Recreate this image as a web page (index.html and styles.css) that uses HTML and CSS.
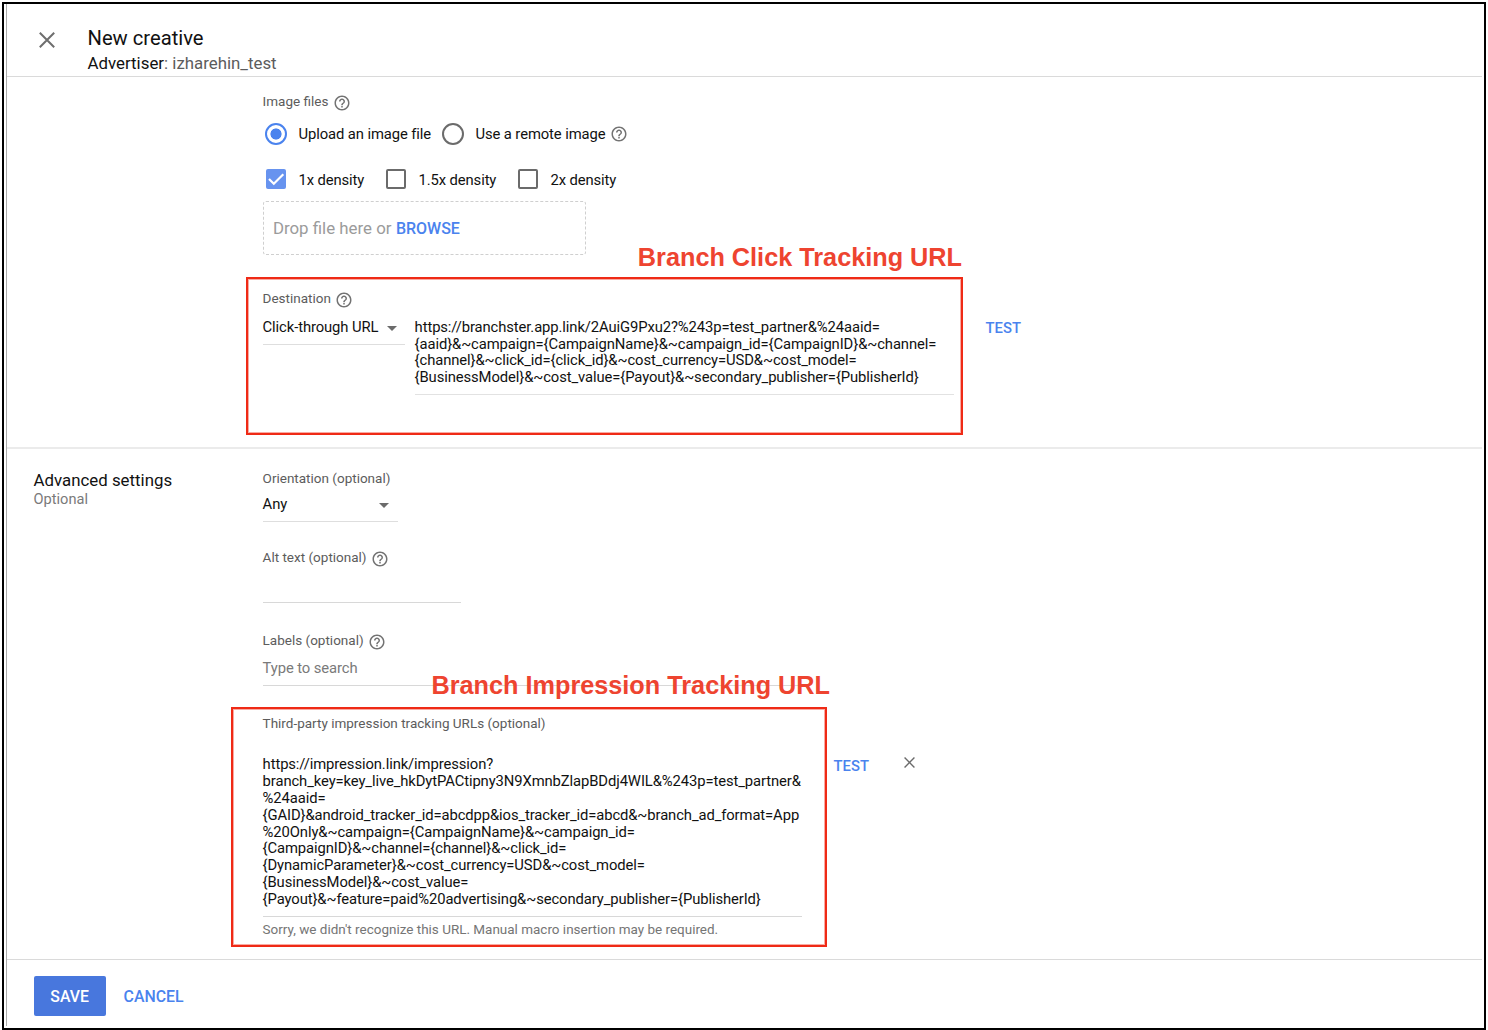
FILE: index.html
```html
<!DOCTYPE html>
<html lang="en">
<head>
<meta charset="utf-8">
<title>New creative</title>
<link rel="stylesheet" href="styles.css">
</head>
<body>
<svg class="defs" aria-hidden="true">
  <symbol id="help" viewBox="0 0 24 24"><path d="M11 18h2v-2h-2v2zm1-16C6.480 2 2 6.480 2 12s4.480 10 10 10 10-4.480 10-10S17.520 2 12 2zm0 18c-4.410 0-8-3.590-8-8s3.590-8 8-8 8 3.590 8 8-3.590 8-8 8zm0-14c-2.210 0-4 1.790-4 4h2c0-1.100.9-2 2-2s2 .9 2 2c0 2-3 1.750-3 5h2c0-2.250 3-2.500 3-5 0-2.210-1.790-4-4-4z"/></symbol>
  <symbol id="close" viewBox="0 0 16 16"><path d="M.8.8l14.400 14.400M15.200.8L.8 15.200" fill="none" stroke="currentColor" stroke-width="2"/></symbol>
</svg>
<div class="frame">
  <div class="screen">
    <header class="header">
      <svg class="close"><use href="#close"/></svg>
      <div class="heading">
        <h1 class="title">New creative</h1>
        <p class="advertiser">Advertiser<span class="advertiser-name">: izharehin_test</span></p>
      </div>
    </header>

    <section class="section files">
      <div class="side"></div>
      <div class="main">
        <div class="label"><span>Image files</span><svg class="help"><use href="#help"/></svg></div>
        <div class="radios">
          <span class="radio on"></span><span class="opt t-upload">Upload an image file</span>
          <span class="radio"></span><span class="opt t-remote">Use a remote image</span><svg class="help help-remote"><use href="#help"/></svg>
        </div>
        <div class="checks">
          <span class="check on"><svg viewBox="0 0 20 20"><path d="M3 10l4.800 4.800L17.300 5.300"/></svg></span><span class="opt t-1x">1x density</span>
          <span class="check"></span><span class="opt t-15x">1.5x density</span>
          <span class="check"></span><span class="opt">2x density</span>
        </div>
        <div class="drop"><span class="t-drop">Drop file here or</span><a class="link browse">BROWSE</a></div>
        <div class="destination">
          <div class="note note-click"><span class="note-text">Branch Click Tracking URL</span></div>
          <div class="label"><span>Destination</span><svg class="help"><use href="#help"/></svg></div>
          <div class="dest-row">
            <div class="select select-dest"><span>Click-through URL</span><i class="arrow"></i></div>
            <div class="url url-click">https://branchster.app.link/2AuiG9Pxu2?%243p=test_partner&amp;%24aaid=<br>{aaid}&amp;~campaign={CampaignName}&amp;~campaign_id={CampaignID}&amp;~channel=<br>{channel}&amp;~click_id={click_id}&amp;~cost_currency=USD&amp;~cost_model=<br>{BusinessModel}&amp;~cost_value={Payout}&amp;~secondary_publisher={PublisherId}</div>
            <a class="link test-click">TEST</a>
          </div>
        </div>
      </div>
    </section>

    <section class="section advanced">
      <div class="side">
        <h2 class="side-title">Advanced settings</h2>
        <p class="side-sub">Optional</p>
      </div>
      <div class="main">
        <div class="label"><span>Orientation (optional)</span></div>
        <div class="select select-any"><span>Any</span><i class="arrow"></i></div>
        <div class="label label-alt"><span>Alt text (optional)</span><svg class="help"><use href="#help"/></svg></div>
        <div class="input input-alt"></div>
        <div class="label label-labels"><span>Labels (optional)</span><svg class="help"><use href="#help"/></svg></div>
        <div class="input input-labels"><span>Type to search</span></div>
        <div class="impression">
          <div class="note note-impression"><span class="note-text">Branch Impression Tracking URL</span></div>
          <div class="label label-third"><span>Third-party impression tracking URLs (optional)</span></div>
          <div class="imp-row">
            <div class="url url-imp">https://impression.link/impression?<br>branch_key=key_live_hkDytPACtipny3N9XmnbZlapBDdj4WIL&amp;%243p=test_partner&amp;<br>%24aaid=<br>{GAID}&amp;android_tracker_id=abcdpp&amp;ios_tracker_id=abcd&amp;~branch_ad_format=App<br>%20Only&amp;~campaign={CampaignName}&amp;~campaign_id=<br>{CampaignID}&amp;~channel={channel}&amp;~click_id=<br>{DynamicParameter}&amp;~cost_currency=USD&amp;~cost_model=<br>{BusinessModel}&amp;~cost_value=<br>{Payout}&amp;~feature=paid%20advertising&amp;~secondary_publisher={PublisherId}</div>
            <a class="link test-imp">TEST</a>
            <svg class="remove"><use href="#close"/></svg>
          </div>
          <p class="hint">Sorry, we didn't recognize this URL. Manual macro insertion may be required.</p>
        </div>
      </div>
    </section>

    <footer class="footer">
      <button class="save">SAVE</button>
      <a class="link cancel">CANCEL</a>
    </footer>
  </div>
</div>
</body>
</html>
```
FILE: styles.css
```css
* { box-sizing: border-box; }
html, body { margin: 0; background: #fff; }
body {
  height: 1030px;
  padding: 2px 2px 0;
  overflow: hidden;
  font-family: Roboto, "Liberation Sans", sans-serif;
  font-size: 14.800px;
  color: #111;
  white-space: nowrap;
}
h1, h2, p { margin: 0; font-weight: 400; }
.defs { position: absolute; width: 0; height: 0; }
.frame { width: 1484px; height: 1028px; border: 2px solid #000; }
.screen {
  display: flex;
  flex-direction: column;
  height: 1022px;
  margin: 0 2px;
  border-left: 1px solid #ababab;
}

.header { display: flex; flex: none; height: 73px; border-bottom: 1px solid #dadada; }
.close { width: 16px; height: 16px; margin: 28px 0 0 32px; color: #6e6e6e; }
.heading { margin-left: 32.500px; padding-top: 21px; }
.title { font-size: 20.200px; line-height: 26px; }
.advertiser { font-size: 16.850px; line-height: 24px; }
.advertiser-name { color: #5c5c5c; }

.section { display: flex; flex: none; }
.files { height: 372px; border-bottom: 2px solid #ebebeb; }
.advanced { height: 511px; border-bottom: 1px solid #dadada; }
.side { width: 255.600px; padding-left: 26.500px; flex: none; }
.files .main { padding-top: 15px; }
.advanced .main { padding-top: 20px; }

.label { display: flex; align-items: center; height: 20px; font-size: 13.500px; line-height: 19px; color: #5c5c5c; }
.label .help { margin-left: 4.500px; }
.label span { height: 20px; }
.help { width: 18px; height: 18px; fill: #737373; flex: none; position: relative; top: .6px; }

.radios { display: flex; align-items: center; height: 22px; margin-top: 11px; padding-left: 2.400px; }
.radio { width: 22px; height: 22px; border: 2px solid #6b6b6b; border-radius: 50%; }
.radio.on { border-color: #4a83ee; background: radial-gradient(circle, #4a83ee 5.200px, transparent 5.900px); }
.opt { line-height: 22px; letter-spacing: -.1px; }
.radio + .opt { margin-left: 11.500px; }
.t-upload { width: 143.500px; }
.t-remote { width: 135px; }
.help-remote { top: 0; }

.checks { display: flex; align-items: center; height: 20px; margin-top: 24px; padding-left: 3.400px; }
.check { width: 20px; height: 20px; border: 2px solid #6b6b6b; border-radius: 2px; }
.check.on { border: 0; background: #6793ef; }
.check svg { display: block; width: 20px; height: 20px; fill: none; stroke: #fff; stroke-width: 2.200; }
.check + .opt { margin-left: 12.500px; padding-top: 1px; }
.t-1x { width: 87.500px; }
.t-15x { width: 99.500px; }

.drop {
  display: flex;
  align-items: center;
  width: 323.500px;
  height: 54px;
  margin-top: 12px;
  padding-left: 9.300px;
  border: 1px dashed #cfcfcf;
  border-radius: 3px;
  font-size: 16.850px;
  color: #9b9b9b;
}
.link { font-weight: 500; color: #4a83ee; }
.t-drop { width: 123px; }
.browse { font-size: 16px; }

.destination { position: relative; margin-top: 34px; }
.dest-row { display: flex; align-items: flex-start; margin-top: 10px; }
.select { display: flex; justify-content: space-between; height: 26px; line-height: 17px; letter-spacing: -.1px; border-bottom: 1px solid #dedede; }
.select-dest { width: 142.500px; padding-right: 8px; }
.arrow { width: 0; height: 0; margin-top: 6.500px; border: 5.500px solid transparent; border-top-color: #6b6b6b; border-bottom: 0; }
.url { line-height: 16.870px; letter-spacing: -.1px; }
.url-click { width: 539px; height: 76px; margin-left: 9.500px; border-bottom: 1px solid #e2e2e2; line-height: 16.700px; }
.test-click { margin-left: 32px; line-height: 19px; }

.note { position: absolute; border: 2px solid #ef2a16; box-shadow: inset 0 0 0 1px rgba(239, 42, 22, .4); pointer-events: none; }
.note-text {
  position: absolute;
  right: -1px;
  bottom: 100%;
  margin-bottom: 7px;
  font: bold 25.250px/30px "Liberation Sans", Arial, sans-serif;
  color: #ee4430;
}
.note-click { left: -16.600px; top: -12px; width: 717px; height: 158px; }
.note-impression { left: -31.600px; top: -6px; width: 596px; height: 240px; }
.note-impression .note-text { right: -5px; margin-bottom: 9px; }

.side-title { margin-top: 22px; font-size: 16.850px; line-height: 19px; }
.side-sub { font-size: 14.600px; line-height: 19px; color: #7a7a7a; }
.select-any { width: 135px; margin-top: 7px; padding-right: 8.500px; }
.label-alt { margin-top: 26px; }
.input-alt { width: 198px; height: 35px; border-bottom: 1px solid #d8d8d8; }
.label-labels { margin-top: 28px; }
.input { line-height: 17px; letter-spacing: -.1px; }
.input-labels { width: 539px; height: 26px; margin-top: 9px; border-bottom: 1px solid #d8d8d8; color: #7a7a7a; }

.impression { position: relative; margin-top: 27px; }
.label-third { line-height: 21px; }
.imp-row { display: flex; align-items: flex-start; margin-top: 23px; }
.url-imp { width: 539px; height: 161px; border-bottom: 1px solid #d8d8d8; }
.test-imp { width: 70px; margin-left: 32px; line-height: 20px; }
.remove { width: 11px; height: 11px; margin-top: 1px; color: #6b6b6b; }
.hint { margin-top: 2px; font-size: 13.480px; line-height: 20px; color: #757575; }

.footer { display: flex; align-items: flex-start; padding: 16px 0 0 26.600px; }
.save { width: 72px; height: 40px; padding: 0; border: 0; border-radius: 2px; background: #4877dd; color: #fff; font: 500 15.800px/41px Roboto, sans-serif; }
.cancel { margin-left: 18px; font-size: 15.850px; line-height: 41px; }
```
